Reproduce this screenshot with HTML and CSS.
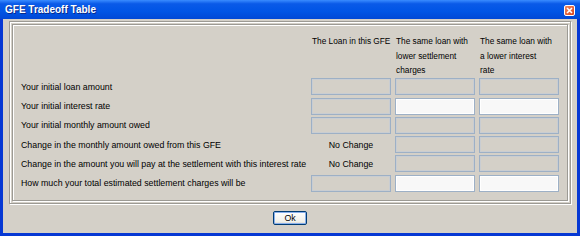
FILE: index.html
```html
<!DOCTYPE html>
<html lang="en">
<head>
  <meta charset="UTF-8" />
  <title>GFE Tradeoff Table</title>
  <link rel="stylesheet" href="styles.css">
</head>
<body>
  <div class="janela">
    <div class="barra-titulo">
      <span class="titulo">GFE Tradeoff Table</span>
      <span class="fechar">
        <svg width="7" height="7" viewBox="0 0 7 7"><path d="M1 1L6 6M6 1L1 6" stroke="#fff" stroke-width="1.6"/></svg>
      </span>
    </div>
    <div class="conteudo">
      <div class="painel">
        <div class="painel-interno">
          <div class="tabela">
            <!-- Cabeçalho -->
            <div></div>
            <div class="cabecalho">The Loan in this GFE</div>
            <div class="cabecalho">The same loan with<br>lower settlement<br>charges</div>
            <div class="cabecalho">The same loan with<br>a lower interest<br>rate</div>

            <div class="rotulo">Your initial loan amount</div>
            <div class="campo"></div>
            <div class="campo"></div>
            <div class="campo"></div>

            <div class="rotulo">Your initial interest rate</div>
            <div class="campo"></div>
            <div class="campo editavel"></div>
            <div class="campo editavel"></div>

            <div class="rotulo">Your initial monthly amount owed</div>
            <div class="campo"></div>
            <div class="campo"></div>
            <div class="campo"></div>

            <div class="rotulo">Change in the monthly amount owed from this GFE</div>
            <div class="sem-mudanca">No Change</div>
            <div class="campo"></div>
            <div class="campo"></div>

            <div class="rotulo">Change in the amount you will pay at the settlement with this interest rate</div>
            <div class="sem-mudanca">No Change</div>
            <div class="campo"></div>
            <div class="campo"></div>

            <div class="rotulo">How much your total estimated settlement charges will be</div>
            <div class="campo"></div>
            <div class="campo editavel"></div>
            <div class="campo editavel"></div>
          </div>
        </div>
      </div>
      <div class="rodape">
        <button type="button" class="botao-ok">Ok</button>
      </div>
    </div>
  </div>
</body>
</html>
```

FILE: styles.css
```css
:root {
  --cor-fundo: #d4d0c8;
  --cor-borda-janela: #0638d4;
  --cor-campo: #9db0c6;
}

* {
  box-sizing: border-box;
  margin: 0;
  padding: 0;
  font-family: 'Liberation Sans', Arial, sans-serif;
}

body {
  background: var(--cor-fundo);
  width: 580px;
  height: 236px;
  overflow: hidden;
}

.janela {
  width: 580px;
  height: 236px;
  display: flex;
  flex-direction: column;
  background: var(--cor-borda-janela);
}

/* Barra de título estilo XP */
.barra-titulo {
  height: 19px;
  display: flex;
  align-items: center;
  justify-content: space-between;
  padding: 0 5px 0 5px;
  background: linear-gradient(#3a8cff 0%, #0a5ae8 20%, #0055e5 60%, #0048d6 100%);
}

.titulo {
  color: #fff;
  font-weight: bold;
  font-size: 10px;
  text-shadow: 1px 1px 0 #0a2a8a;
}

.fechar {
  width: 11px;
  height: 11px;
  margin-top: 1px;
  display: flex;
  align-items: center;
  justify-content: center;
  background: linear-gradient(135deg, #f08a60, #d8431c);
  border: 1px solid #fff;
  border-radius: 2px;
}

.conteudo {
  flex: 1;
  margin: 0 3px 3px 3px;
  background: var(--cor-fundo);
  display: flex;
  flex-direction: column;
}

/* Borda dupla gravada */
.painel {
  margin: 2px 6px 0 6px;
  height: 183px;
  padding: 2px;
  border: 1px solid #9c9a94;
  box-shadow: inset 1px 1px 0 #fff, 1px 1px 0 #fff;
}

.painel-interno {
  height: 100%;
  border: 1px solid #9c9a94;
  box-shadow: inset 1px 1px 0 #fff, 1px 1px 0 #fff;
  padding: 9px 0 0 8px;
}

.tabela {
  display: grid;
  grid-template-columns: 286px 80px 80px 80px;
  grid-template-rows: 42px repeat(6, 17px);
  column-gap: 4px;
  row-gap: 2.3px;
  font-size: 8.8px;
  color: #000;
}

.cabecalho {
  font-size: 8.3px;
  line-height: 14.5px;
  padding-left: 1px;
  white-space: nowrap;
}

.rotulo {
  display: flex;
  align-items: center;
  white-space: nowrap;
}

.campo {
  border: 1px solid var(--cor-campo);
  box-shadow: inset 0 0 0 1px #c9cdd2;
  background: var(--cor-fundo);
}

.campo.editavel {
  background: #f8f8f8;
  box-shadow: inset 0 0 0 1px #fff;
}

.sem-mudanca {
  display: flex;
  align-items: center;
  justify-content: center;
}

.rodape {
  flex: 1;
  display: flex;
  align-items: center;
  justify-content: center;
  padding-bottom: 1px;
}

.botao-ok {
  width: 34px;
  height: 14px;
  font-size: 8.8px;
  color: #000;
  border: 1px solid #003c74;
  border-radius: 2px;
  background: linear-gradient(#fff, #f0f0ea 80%, #d8d4c8);
  box-shadow: inset 0 0 0 1px #8ab0ec;
  cursor: pointer;
}
```
